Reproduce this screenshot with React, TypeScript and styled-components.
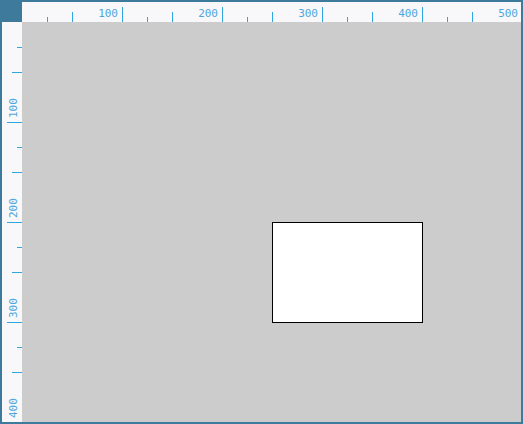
import React from "react";
import styled, { createGlobalStyle } from "styled-components";

const Global = createGlobalStyle`
  html, body { margin: 0; padding: 0; background: #ffffff; }
  body { font-family: "DejaVu Sans Mono", monospace; }
`;

const Frame = styled.div`
  width: 523px;
  height: 424px;
  box-sizing: border-box;
  padding: 2px;
  background: #3e7a9c;
  display: grid;
  grid-template-columns: 20px 1fr;
  grid-template-rows: 20px 1fr;
`;

const Corner = styled.div`
  background: #3e7a9c;
`;

const RulerBox = styled.div`
  background: #f8f8fa;
  overflow: hidden;
  svg { display: block; }
`;

const Canvas = styled.div`
  position: relative;
  background: #cccccc;
  overflow: hidden;
`;

const Shape = styled.div<{ $x: number; $y: number; $w: number; $h: number }>`
  position: absolute;
  left: ${(p) => p.$x}px;
  top: ${(p) => p.$y}px;
  width: ${(p) => p.$w}px;
  height: ${(p) => p.$h}px;
  box-sizing: border-box;
  background: #ffffff;
  border: 1px solid #000000;
`;

const TICK = "#2fa6de";
const LABEL = "#4ea7dc";

const tickLen = (v: number) => (v % 100 === 0 ? 15 : v % 50 === 0 ? 10 : 5);
const values = (max: number) => {
  const out: number[] = [];
  for (let v = 25; v <= max; v += 25) {
    if (v % 100 === 75) continue;
    out.push(v);
  }
  return out;
};

const TopRuler: React.FC = () => (
  <RulerBox>
    <svg width="499" height="20">
      {values(500).map((v) => (
        <line key={v} x1={v + 0.5} x2={v + 0.5} y1={20 - tickLen(v)} y2={20} stroke={TICK} strokeWidth={1} />
      ))}
      {[100, 200, 300, 400, 500].map((v) => (
        <text key={v} x={v - 4} y={15} textAnchor="end" fontSize={11} fill={LABEL} fontFamily="DejaVu Sans Mono, monospace">
          {v}
        </text>
      ))}
    </svg>
  </RulerBox>
);

const LeftRuler: React.FC = () => (
  <RulerBox>
    <svg width="20" height="400">
      {values(400).map((v) => (
        <line key={v} y1={v + 0.5} y2={v + 0.5} x1={20 - tickLen(v)} x2={20} stroke={TICK} strokeWidth={1} />
      ))}
      {[100, 200, 300, 400].map((v) => (
        <text
          key={v}
          transform={`translate(15 ${v - 4}) rotate(-90)`}
          textAnchor="start"
          fontSize={11}
          fill={LABEL}
          fontFamily="DejaVu Sans Mono, monospace"
        >
          {v}
        </text>
      ))}
    </svg>
  </RulerBox>
);

export default function App() {
  return (
    <>
      <Global />
      <Frame>
        <Corner />
        <TopRuler />
        <LeftRuler />
        <Canvas>
          <Shape $x={250} $y={200} $w={151} $h={101} />
        </Canvas>
      </Frame>
    </>
  );
}
